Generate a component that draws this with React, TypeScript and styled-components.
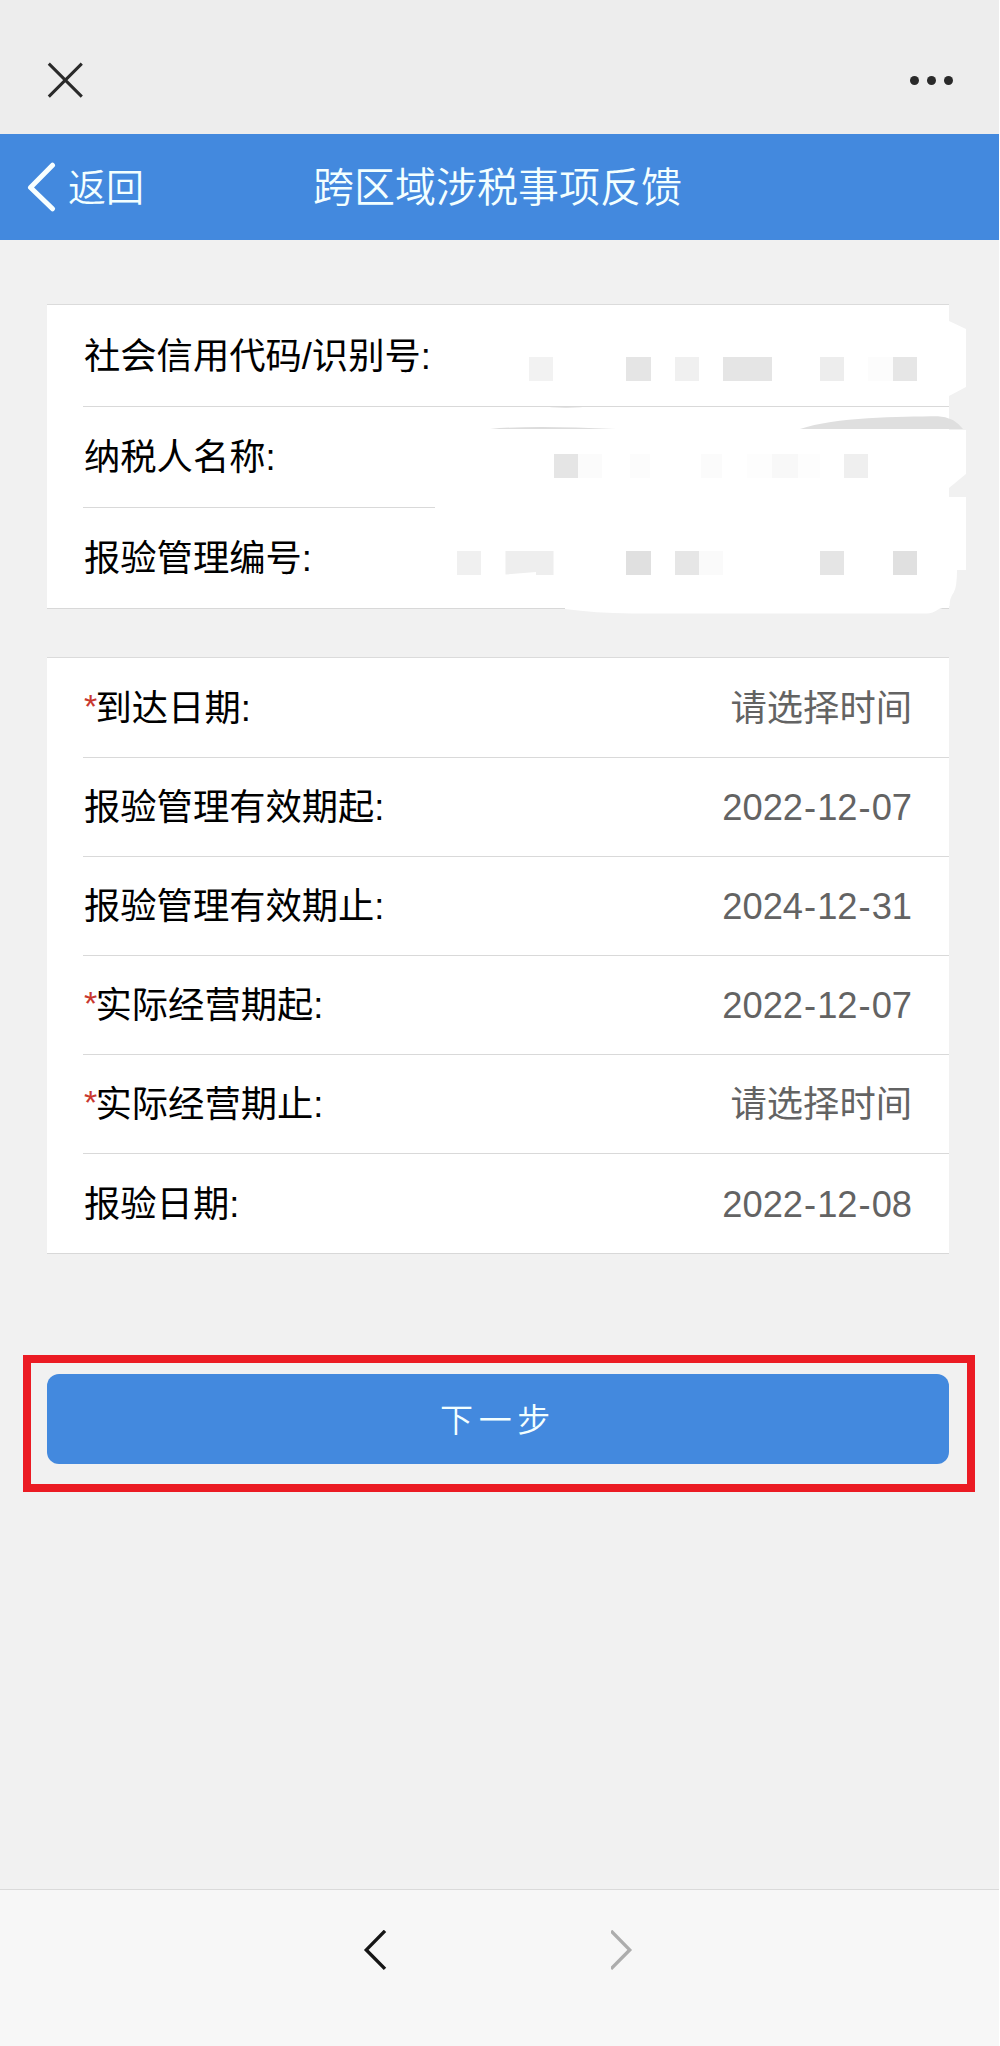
import React from "react";
import styled, { createGlobalStyle } from "styled-components";

const GlobalStyle = createGlobalStyle`
  * { box-sizing: border-box; }
  body { margin: 0; background: #fff; }
`;

const Page = styled.div`
  width: 999px;
  height: 2046px;
  display: flex;
  flex-direction: column;
  background: #f1f1f1;
  font-family: "Liberation Sans", "Noto Sans CJK SC", sans-serif;
  color: #000;
  overflow: hidden;
`;

const TopBar = styled.header`
  height: 134px;
  flex: none;
  display: flex;
  justify-content: space-between;
  align-items: flex-start;
  padding: 62px 46px 0 47px;
  background: #ededed;
`;

const Dots = styled.div`
  display: flex;
  gap: 8px;
  padding-top: 14px;
`;

const Dot = styled.i`
  width: 9px;
  height: 9px;
  border-radius: 50%;
  background: #2a2a2a;
`;

const NavBar = styled.nav`
  height: 106px;
  flex: none;
  display: grid;
  grid-template-columns: 313px 1fr 313px;
  align-items: center;
  background: #4389de;
  color: #f3ffff;
`;

const Back = styled.div`
  display: flex;
  align-items: center;
  gap: 12px;
  padding-left: 27px;
  font-size: 38px;
  font-weight: 350;
  line-height: 50px;
`;

const BackText = styled.span`
  padding-top: 2px;
`;

const Title = styled.h1`
  margin: 0;
  padding-top: 2px;
  font-size: 41px;
  font-weight: 350;
  line-height: 50px;
  white-space: nowrap;
`;

const Content = styled.main`
  flex: 1;
  display: flex;
  flex-direction: column;
`;

const Card = styled.section<{ $top: number; $row: number }>`
  position: relative;
  margin: ${(p) => p.$top}px 50px 0 47px;
  border-top: 1px solid #dbdbdb;
  border-bottom: 1px solid #d8d8d8;
  background: #fff;
  display: grid;
  grid-auto-rows: ${(p) => p.$row}px;
  padding-left: 36px;
`;

const Row = styled.div`
  display: flex;
  align-items: center;
  justify-content: space-between;
  padding: 2px 37px 0 1px;
  font-size: 36.3px;
  line-height: 48px;
  & + & {
    border-top: 1px solid #d9d9d9;
  }
`;

const Label = styled.span`
  white-space: nowrap;
`;

const Value = styled.span`
  color: #636363;
  white-space: nowrap;
`;

const Dash = styled.span`
  padding: 0 1px;
`;

const Required = styled.span`
  display: inline-block;
  width: 11.5px;
  color: #c9382f;
  font-size: 34px;
  line-height: 40px;
  vertical-align: 3px;
`;

const Redaction = styled.svg`
  position: absolute;
  left: 383px;
  top: 0;
  width: 540px;
  height: 320px;
  overflow: visible;
`;

const Highlight = styled.div`
  margin: 101px 24px 0 23px;
  height: 137px;
  padding: 11px 18px 0 16px;
  border: 8px solid #eb1b23;
`;

const NextButton = styled.button`
  display: flex;
  align-items: center;
  justify-content: center;
  width: 100%;
  height: 90px;
  padding: 5px 0 0;
  border: 0;
  border-radius: 12px;
  background: #4389de;
  color: #f3ffff;
  font: 350 33px/48px "Liberation Sans", "Noto Sans CJK SC", sans-serif;
  letter-spacing: 5.7px;
`;

const BottomBar = styled.footer`
  height: 157px;
  flex: none;
  display: flex;
  align-items: flex-start;
  gap: 223.5px;
  padding: 40px 0 0 363px;
  border-top: 1px solid #dadada;
  background: #f7f7f7;
`;

const basics = ["社会信用代码/识别号:", "纳税人名称:", "报验管理编号:"];

const dates = [
  { label: "到达日期:", value: "请选择时间", required: true },
  { label: "报验管理有效期起:", value: "2022-12-07" },
  { label: "报验管理有效期止:", value: "2024-12-31" },
  { label: "实际经营期起:", value: "2022-12-07", required: true },
  { label: "实际经营期止:", value: "请选择时间", required: true },
  { label: "报验日期:", value: "2022-12-08" },
];

// x, y, width, fill of every mosaic block; all are 24px high
const blocks: [number, number, number, string][] = [
  [529, 357, 24, "#f2f2f2"],
  [626, 357, 25, "#e5e5e5"],
  [675, 357, 24, "#f0f0f0"],
  [723, 357, 49, "#e5e5e5"],
  [820, 357, 24, "#ededed"],
  [868, 357, 25, "#fcfcfc"],
  [893, 357, 24, "#e6e6e6"],
  [554, 454, 24, "#e5e5e5"],
  [578, 454, 24, "#fbfbfb"],
  [630, 454, 20, "#fcfcfc"],
  [701, 454, 21, "#fbfbfb"],
  [747, 454, 25, "#fdfdfd"],
  [772, 454, 26, "#f8f8f8"],
  [798, 454, 22, "#fdfdfd"],
  [844, 454, 24, "#efefef"],
  [457, 551, 24, "#f0f0f0"],
  [626, 551, 25, "#e0e0e0"],
  [675, 551, 24, "#e6e6e6"],
  [699, 551, 24, "#fafafa"],
  [820, 551, 24, "#e5e5e5"],
  [893, 551, 24, "#e0e0e0"],
];

const withDashes = (text: string) =>
  text.split("-").map((part, i) => (
    <React.Fragment key={i}>
      {i > 0 && <Dash>-</Dash>}
      {part}
    </React.Fragment>
  ));

export default function App() {
  return (
    <>
      <GlobalStyle />
      <Page>
        <TopBar>
          <svg width="36" height="36" viewBox="0 0 36 36" fill="none" stroke="#2a2a2a" strokeWidth="3">
            <path d="M1.8 1.6 34.8 34.6M34.8 1.6 1.8 34.6" />
          </svg>
          <Dots>
            <Dot />
            <Dot />
            <Dot />
          </Dots>
        </TopBar>
        <NavBar>
          <Back>
            <svg width="29" height="50" viewBox="0 0 29 50" fill="none" stroke="#f8ffff" strokeWidth="5" strokeLinecap="round" strokeLinejoin="round">
              <path d="M25.5 3.2 3.5 25.5 25.5 46.8" />
            </svg>
            <BackText>返回</BackText>
          </Back>
          <Title>跨区域涉税事项反馈</Title>
        </NavBar>
        <Content>
          <Card $top={64} $row={101}>
            {basics.map((label) => (
              <Row key={label}>
                <Label>{label}</Label>
              </Row>
            ))}
            <Redaction viewBox="430 305 540 320">
              <path d="M435 500H966V570H957Q957 586 954 592Q949.5 598 949.5 606L939 609Q932 613.5 927 613.5H632Q595 613 565 609V600H435Z" fill="#fff" />
              <path d="M949 321 966 329V387L949 396ZM949 430H966V474L949 488ZM949 497H966V510H949Z" fill="#fff" />
              <path d="M800 429C835 417 900 416.5 938 416.2Q953 416.5 963 429Z" fill="#dfdfdf" />
              <path d="M490 429Q530 425 616 429Z" fill="#dcdcdc" />
              <path d="M538 406H594Q566 409.5 538 406Z" fill="#d9d9d9" />
              {blocks.map(([x, y, w, fill]) => (
                <rect key={`${x}-${y}`} x={x} y={y} width={w} height="24" fill={fill} />
              ))}
              <path d="M505.5 551H553.5V575H536V572L505.5 574.5Z" fill="#eee" />
            </Redaction>
          </Card>
          <Card $top={48} $row={99.1}>
            {dates.map(({ label, value, required }) => (
              <Row key={label}>
                <Label>
                  {required && <Required>*</Required>}
                  {label}
                </Label>
                <Value>{withDashes(value)}</Value>
              </Row>
            ))}
          </Card>
          <Highlight>
            <NextButton>下一步</NextButton>
          </Highlight>
        </Content>
        <BottomBar>
          <svg width="24" height="42" viewBox="0 0 24 42" fill="none" stroke="#161616" strokeWidth="3.4">
            <path d="M22 .9 3.3 19.9 22 38.9" />
          </svg>
          <svg width="24" height="42" viewBox="0 0 24 42" fill="none" stroke="#adadad" strokeWidth="3.4">
            <path d="M0 .9 18.7 19.9 0 38.9" />
          </svg>
        </BottomBar>
      </Page>
    </>
  );
}
